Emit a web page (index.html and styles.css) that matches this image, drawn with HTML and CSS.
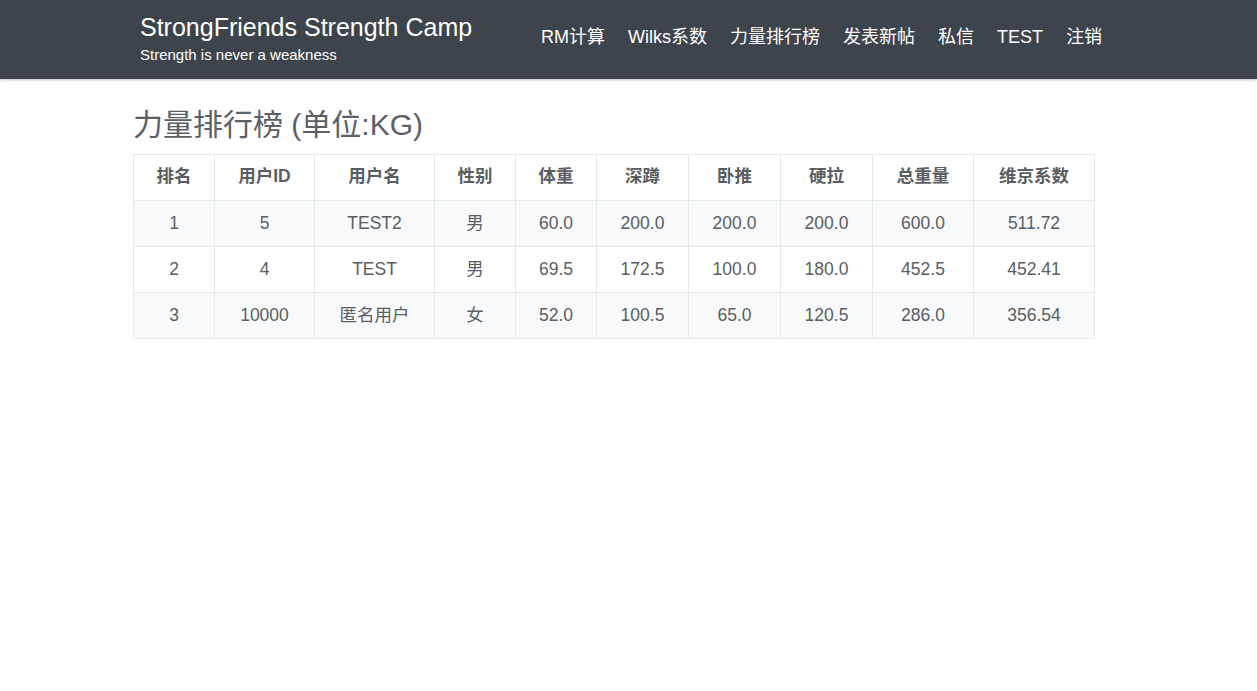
FILE: index.html
```html
<!DOCTYPE html>
<html lang="zh">
<head>
<meta charset="utf-8">
<title>力量排行榜</title>
<link rel="stylesheet" href="styles.css">
</head>
<body>
<header class="topbar">
  <div class="topbar-inner">
    <div class="brand">
      <div class="brand-title">StrongFriends Strength Camp</div>
      <div class="brand-sub">Strength is never a weakness</div>
    </div>
    <nav class="nav">
      <a href="#">RM计算</a>
      <a href="#">Wilks系数</a>
      <a href="#">力量排行榜</a>
      <a href="#">发表新帖</a>
      <a href="#">私信</a>
      <a href="#">TEST</a>
      <a href="#">注销</a>
    </nav>
  </div>
</header>
<main class="content">
  <h1 class="page-title">力量排行榜 (单位:KG)</h1>
  <table class="rank">
    <colgroup>
      <col class="c1"><col class="c2"><col class="c3"><col class="c4"><col class="c5">
      <col class="c6"><col class="c7"><col class="c8"><col class="c9"><col class="c10">
    </colgroup>
    <thead>
      <tr><th>排名</th><th>用户ID</th><th>用户名</th><th>性别</th><th>体重</th><th>深蹲</th><th>卧推</th><th>硬拉</th><th>总重量</th><th>维京系数</th></tr>
    </thead>
    <tbody>
      <tr><td>1</td><td>5</td><td>TEST2</td><td>男</td><td>60.0</td><td>200.0</td><td>200.0</td><td>200.0</td><td>600.0</td><td>511.72</td></tr>
      <tr><td>2</td><td>4</td><td>TEST</td><td>男</td><td>69.5</td><td>172.5</td><td>100.0</td><td>180.0</td><td>452.5</td><td>452.41</td></tr>
      <tr><td>3</td><td>10000</td><td>匿名用户</td><td>女</td><td>52.0</td><td>100.5</td><td>65.0</td><td>120.5</td><td>286.0</td><td>356.54</td></tr>
    </tbody>
  </table>
</main>
</body>
</html>
```
FILE: styles.css
```css
html, body {
  margin: 0;
  padding: 0;
  background: #fff;
  font-family: "Liberation Sans", Arial, "Noto Sans CJK SC", sans-serif;
}
.topbar {
  background: #3d444c;
  height: 79px;
  box-shadow: 0 1px 3px rgba(0,0,0,0.25);
}
.topbar-inner {
  display: flex;
  align-items: flex-start;
  padding-left: 140px;
}
.brand {
  color: #fff;
  padding-top: 13px;
}
.brand-title {
  font-size: 25px;
  line-height: 29px;
}
.brand-sub {
  font-size: 15px;
  line-height: 18px;
  margin-top: 4px;
}
.nav {
  display: flex;
  gap: 23px;
  margin-left: 69px;
  padding-top: 26px;
}
.nav a {
  color: #fff;
  text-decoration: none;
  font-size: 18px;
  line-height: 22px;
}
.content {
  padding-left: 133px;
  padding-top: 1px;
}
.page-title {
  font-size: 30px;
  font-weight: normal;
  color: #5c6066;
  margin: 27px 0 11px;
  line-height: 36px;
}
.rank {
  border-collapse: collapse;
  width: 962px;
  border: 1px solid #e6eaeb;
  color: #5a5e63;
  font-size: 17.5px;
}
.rank th, .rank td {
  border: 1px solid #e6eaeb;
  text-align: center;
  height: 43px;
  padding: 0 0 2px;
  line-height: 20px;
}
.rank th {
  font-weight: bold;
  height: 42px;
  padding-bottom: 3px;
}
.rank tbody tr:nth-child(odd) {
  background: #f8f9fa;
}
.c1 { width: 81px; }
.c2 { width: 100px; }
.c3 { width: 120px; }
.c4 { width: 81px; }
.c5 { width: 81px; }
.c6 { width: 92px; }
.c7 { width: 92px; }
.c8 { width: 92px; }
.c9 { width: 101px; }
.c10 { width: 121px; }
```
